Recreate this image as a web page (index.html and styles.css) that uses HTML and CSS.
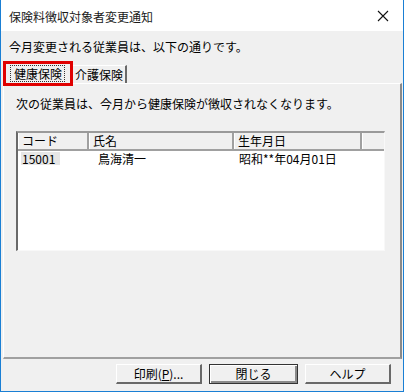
FILE: index.html
```html
<!DOCTYPE html>
<html lang="ja">
<head>
    <meta charset="UTF-8">
    <title>保険料徴収対象者変更通知</title>
    <link rel="stylesheet" href="styles.css">
</head>
<body>
    <div class="window">
        <!-- Title bar -->
        <div class="titlebar">
            <span class="title">保険料徴収対象者変更通知</span>
            <svg class="close" width="12" height="12" viewBox="0 0 12 12">
                <path d="M1 1 L11 11 M11 1 L1 11" stroke="#111" stroke-width="1.1" fill="none"/>
            </svg>
        </div>

        <div class="content">
            <div class="message">今月変更される従業員は、以下の通りです。</div>

            <!-- Tabs -->
            <div class="tabs">
                <div class="tab active"><span class="focus">健康保険</span></div>
                <div class="tab">介護保険</div>
            </div>

            <div class="panel">
                <div class="panel-text">次の従業員は、今月から健康保険が徴収されなくなります。</div>

                <div class="listview">
                    <div class="list-head">
                        <div class="col col-code">コード</div>
                        <div class="col col-name">氏名</div>
                        <div class="col col-birth">生年月日</div>
                        <div class="col col-fill"></div>
                    </div>
                    <div class="list-row">
                        <div class="cell col-code"><span class="selected">15001</span></div>
                        <div class="cell col-name name-cell">鳥海清一</div>
                        <div class="cell col-birth">昭和**年04月01日</div>
                    </div>
                </div>
            </div>

            <!-- Buttons -->
            <div class="buttons">
                <button class="btn">印刷(<u>P</u>)...</button>
                <button class="btn default">閉じる</button>
                <button class="btn">ヘルプ</button>
            </div>
        </div>
    </div>
</body>
</html>
```

FILE: styles.css
```css
/* Dialog window */
body {
    margin: 0;
    padding: 0;
    background: #ffffff;
    font-family: "Noto Sans CJK JP", "Noto Sans", sans-serif;
    font-size: 12px;
    color: #000;
}

.window {
    width: 404px;
    height: 392px;
    box-sizing: border-box;
    border: 1px solid #1a7fd4;
    border-top: none;
    display: flex;
    flex-direction: column;
    overflow: hidden;
}

/* Title bar */
.titlebar {
    height: 31px;
    background: #ffffff;
    display: flex;
    align-items: center;
    justify-content: space-between;
    padding: 0 14px 0 8px;
    flex-shrink: 0;
}

.title {
    font-size: 12px;
    color: #1a1a1a;
    line-height: 16px;
    margin-top: 2px;
}

.close {
    margin-top: 1px;
}

/* Dialog body */
.content {
    flex: 1;
    background: #f0f0f0;
    display: flex;
    flex-direction: column;
    padding: 8px 1px 0 2px;
}

.message {
    line-height: 16px;
    padding-left: 6px;
    height: 16px;
}

/* Tabs */
.tabs {
    display: flex;
    height: 20px;
    margin-top: 8px;
    padding-left: 2px;
    align-items: flex-end;
}

.tab {
    width: 56px;
    height: 18px;
    line-height: 18px;
    padding: 0 0 0 3px;
    border-top: 1px solid #fff;
    border-left: 1px solid #fff;
    border-right: 2px solid #696969;
    box-sizing: border-box;
}

.tab.active {
    width: 66px;
    height: 21px;
    margin-bottom: -1px;
    outline: 3px solid #e00000;
    outline-offset: -1px;
    padding: 1px 0 0 4px;
    position: relative;
    z-index: 1;
    background: #f0f0f0;
    border-right: 1px solid #a0a0a0;
}

.focus {
    display: inline-block;
    width: 55px;
    box-sizing: border-box;
    border: 1px dotted #333;
    line-height: 15px;
    padding: 0 0 0 3px;
}

/* Tab panel */
.panel {
    height: 276px;
    box-sizing: border-box;
    border-top: 1px solid #ffffff;
    border-left: 1px solid #ffffff;
    border-right: 2px solid #8a8a8a;
    border-bottom: 2px solid #a0a0a0;
    padding: 12px 14px 0 12px;
    display: flex;
    flex-direction: column;
}

.panel-text {
    line-height: 16px;
}

/* List view */
.listview {
    margin-top: 19px;
    width: 369px;
    height: 120px;
    box-sizing: border-box;
    background: #ffffff;
    border-top: 2px solid #9a9a9a;
    border-left: 2px solid #696969;
    border-right: 1px solid #f8f8f8;
    border-bottom: 1px solid #f8f8f8;
}

.list-head {
    display: flex;
    height: 16px;
    background: #f0f0f0;
    border-bottom: 2px solid #a0a0a0;
}

.col {
    line-height: 16px;
    padding-left: 3px;
    box-sizing: border-box;
    border-right: 2px solid #a0a0a0;
    border-left: 1px solid #fff;
}

.col-code { width: 71px; }
.col-name { width: 145px; }
.col-birth { width: 128px; }
.col-fill { flex: 1; border-right: none; }

.list-row {
    display: flex;
    height: 13px;
    line-height: 13px;
    padding-top: 1px;
}

.cell {
    box-sizing: border-box;
    padding-left: 3px;
}

.name-cell {
    padding-left: 9px;
}

.list-row .col-birth {
    padding-left: 5px;
}

.selected {
    display: inline-block;
    background: #e6e6e6;
    width: 38px;
    padding-left: 1px;
}

/* Buttons */
.buttons {
    display: flex;
    justify-content: flex-end;
    gap: 7px;
    margin-top: 5px;
    padding-right: 11px;
}

.btn {
    font-family: inherit;
    font-size: 12px;
    width: 86px;
    height: 20px;
    padding: 0;
    background: #f0f0f0;
    border-top: 1px solid #ffffff;
    border-left: 1px solid #ffffff;
    border-right: 2px solid #696969;
    border-bottom: 2px solid #696969;
    box-sizing: border-box;
    line-height: 16px;
}

.btn.default {
    width: 89px;
    border: 1px solid #333;
    box-shadow: inset 1px 1px 0 #fff, inset -2px -2px 0 #8a8a8a;
}
```
